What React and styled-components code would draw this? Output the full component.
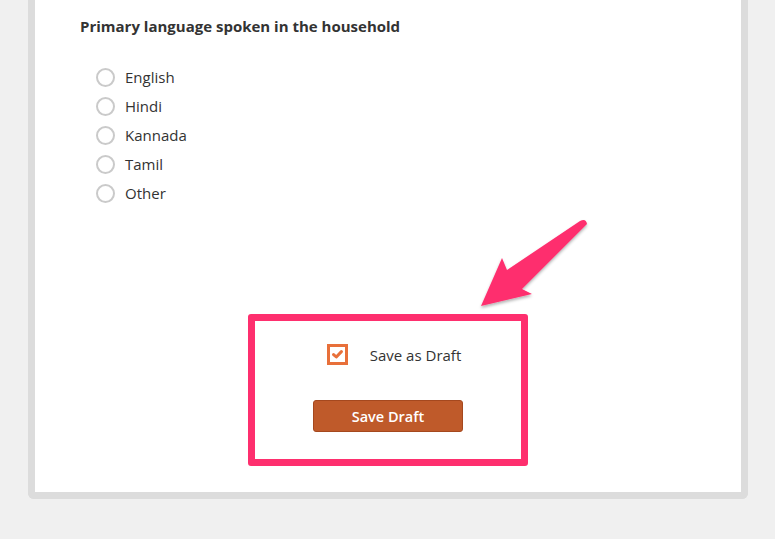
import React, { useState } from 'react';
import styled, { createGlobalStyle } from 'styled-components';

const GlobalStyle = createGlobalStyle`
  html, body {
    margin: 0;
    padding: 0;
    background: #f0f0f0;
    font-family: "Open Sans", "Liberation Sans", sans-serif;
    color: #333;
  }
`;

const Page = styled.div`
  position: relative;
  width: 775px;
  height: 539px;
  overflow: hidden;
`;

const Card = styled.div`
  margin: -10px 27px 0 28px;
  background: #fff;
  border: 7px solid #dcdcdc;
  border-top: none;
  border-radius: 0 0 6px 6px;
  padding: 26px 45px 26px 45px;
`;

const Question = styled.h3`
  margin: 0;
  font-size: 15px;
  font-weight: 700;
  line-height: 20px;
  color: #333;
`;

const Options = styled.div`
  display: flex;
  flex-direction: column;
  gap: 9px;
  margin: 31px 0 0 16px;
`;

const Option = styled.label`
  display: flex;
  align-items: center;
  gap: 10px;
  font-size: 15px;
  line-height: 20px;
  color: #333;
  cursor: pointer;
`;

const Radio = styled.span`
  box-sizing: border-box;
  width: 19px;
  height: 19px;
  border-radius: 50%;
  border: 2.5px solid ${p => (p.$on ? '#e8703a' : '#cacaca')};
  background: ${p => (p.$on ? 'radial-gradient(#e8703a 35%, #fff 40%)' : '#fff')};
`;

const Highlight = styled.div`
  width: 266px;
  margin: 111px auto 0;
  border: 7px solid #fe2f6e;
  border-radius: 3px;
  padding: 23px 0 27px;
  display: flex;
  flex-direction: column;
  align-items: center;
  gap: 35px;
`;

const DraftRow = styled.label`
  display: flex;
  align-items: center;
  gap: 22px;
  margin-left: 12px;
  font-size: 15px;
  line-height: 20px;
  color: #333;
  cursor: pointer;
`;

const Check = styled.span`
  box-sizing: border-box;
  width: 21px;
  height: 21px;
  border: 3px solid #e8703a;
  background: #fff;
  display: flex;
  align-items: center;
  justify-content: center;
`;

const Button = styled.button`
  width: 150px;
  height: 32px;
  background: #bf5a2a;
  border: 1px solid #a5481e;
  border-radius: 3px;
  color: #fff;
  font-family: inherit;
  font-size: 14.5px;
  font-weight: 600;
  cursor: pointer;
`;

const ArrowLayer = styled.svg`
  position: absolute;
  left: 0;
  top: 0;
  pointer-events: none;
`;

const languages = ['English', 'Hindi', 'Kannada', 'Tamil', 'Other'];

const App = () => {
  const [lang, setLang] = useState(null);
  const [draft, setDraft] = useState(true);

  return (
    <Page>
      <GlobalStyle />
      <Card>
        <Question>Primary language spoken in the household</Question>
        <Options>
          {languages.map(l => (
            <Option key={l} onClick={() => setLang(l)}>
              <Radio $on={lang === l} />
              {l}
            </Option>
          ))}
        </Options>
        <Highlight>
          <DraftRow onClick={() => setDraft(!draft)}>
            <Check>
              {draft && (
                <svg width="11" height="9" viewBox="0 0 11 9">
                  <path d="M1.6 4.6 L4.3 7 L9.4 1.6" fill="none" stroke="#e8703a" strokeWidth="3" strokeLinecap="round" strokeLinejoin="round" />
                </svg>
              )}
            </Check>
            Save as Draft
          </DraftRow>
          <Button type="button">Save Draft</Button>
        </Highlight>
      </Card>
      <ArrowLayer width="775" height="539">
        <defs>
          <filter id="sh" x="-20%" y="-20%" width="140%" height="140%">
            <feDropShadow dx="0" dy="2" stdDeviation="1.5" floodColor="#000" floodOpacity="0.3" />
          </filter>
        </defs>
        <path
          d="M481 306 L502 258 L507 270 L580 221 Q586 218 587 224 L522 289 L532 294 Z"
          fill="#fe2f6e"
          filter="url(#sh)"
        />
      </ArrowLayer>
    </Page>
  );
};

export default App;
